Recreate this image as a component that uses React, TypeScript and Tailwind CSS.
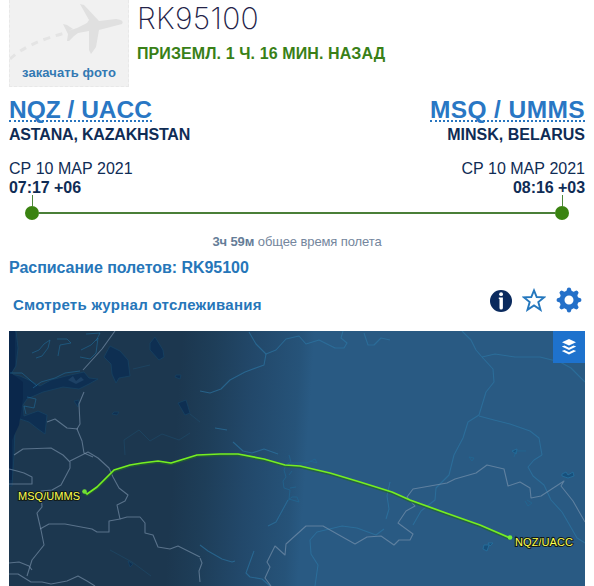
type Airport = { code: string; city: string; date: string; time: string };

const origin: Airport = { code: 'NQZ / UACC', city: 'ASTANA, KAZAKHSTAN', date: 'СР 10 МАР 2021', time: '07:17 +06' };
const destination: Airport = { code: 'MSQ / UMMS', city: 'MINSK, BELARUS', date: 'СР 10 МАР 2021', time: '08:16 +03' };

// country borders
const borders = [
  'M115 331 L102 349 L83 370',
  'M84 392 L79 404 L80 424 L77 429 L82 441 L84 453 L93 457',
  'M47 422 L55 419 L67 428 L78 429',
  'M14 455 L23 449 L51 448 L63 455 L70 462 L70 468 L61 485 L52 490 L41 491 L42 507 L37 513 L41 530 L44 545 L32 560 L27 576',
  'M70 461 L88 452 L98 458 L109 468 L113 477 L119 488 L128 495 L125 501 L117 505 L120 519 L109 521 L109 532 L97 532 L92 529 L65 524 L49 524 L40 529',
  'M120 519 L127 517 L140 517 L145 523 L145 533 L153 535 L158 547 L170 549 L178 546 L200 557',
  'M9 469 L17 471 L24 473 L32 477 L32 484 L9 484',
  'M9 563 L19 562 L29 566 L32 570 M9 574 L18 574 L31 582 L42 582 L51 584 L67 581 L78 576 L87 581 L95 586',
  'M271 586 L265 578 L270 567 L267 562 L275 546 L285 555 L286 544 L306 526 L323 526 L355 544 L367 537 L381 536 L394 545 L399 540 L410 540 L413 534 L398 523 L406 511 L415 506 L407 497 L413 489 L447 483 L455 479 L476 473 L487 465 L504 469 L508 486 L520 482 L530 488 L531 498 L541 496 L564 481 L561 486 L573 501 L585 522',
  'M200 558 L202 563 L199 571 L200 582',
];

// rivers
const rivers = [
  'M249 332 L256 344 L266 354 L276 350 L286 339 L299 336 L306 344 L319 340 L335 348 L344 348 L347 343 L341 338 L343 331',
  'M364 333 L368 345 L374 345 L381 338 L390 340',
  'M266 354 L264 365 L245 372 L230 380 L221 389 L210 393 L200 391',
  'M462 331 L471 340 L476 350 L482 357 L493 369 L494 382 L486 392 L479 415 L468 422 L463 438 L454 455',
  'M482 357 L495 354 L515 357 L540 357 L560 362 L571 368 L585 382',
  'M479 416 L494 420 L510 424 L530 431 L539 438 L542 455',
  'M542 455 L534 460 L528 467 L533 476 L544 485 L551 500 L562 512 L569 524 L577 538 L585 543',
  'M454 455 L449 475 L436 488 L435 500 L421 511 L413 525',
  'M390 482 L387 496 L389 509 L386 519 M384 529 L376 535 L357 528 L342 526 L317 532 L310 540 L311 554 L318 565 L315 586',
  'M288 500 L282 511 L276 522 L268 526',
  'M200 545 L208 551 L222 559 L232 562 L235 561 M254 551 L246 573 L250 577 L262 579 L270 586',
  'M215 428 L227 430 M233 442 L243 451 L252 453 L264 449 L278 454',
];

// small streams, barely visible on the night side
const streams = [
  'M125 455 L124 440 L139 430 L150 441 L162 434 L179 440 L190 433',
  'M110 550 L132 562 L151 576',
  'M133 369 L150 365 M190 414 L200 422',
];

// jagged reservoir and lake outlines
const shorelines = [
  'M289 455 L291 462 L286 465 L284 470 L286 477 L283 481 L284 488 L290 490 L289 499 L299 502 L297 497 L292 497 L287 501 M291 463 L307 463 L315 459 L317 463 L310 461 M289 475 L292 471 M290 488 L296 487',
  'M32 353 L39 350 L44 344 L50 340 L48 348 L42 356 L36 358 M57 339 L67 339 L71 343 L60 345 L58 356 M81 350 L91 345 L98 338 L96 353 L90 359 L80 357 M86 334 L100 333 L96 341',
  'M27 397 L36 399 L34 408 L24 406 L26 414 M10 373 L22 373 L30 380 L37 386 M33 388 L41 382 L55 378 L65 373 L80 371',
  'M526 451 L516 451 L514 457 M527 500 L532 503 L528 506 L525 501',
  'M469 457 L474 458 L472 461 Z',
];

const water = [
  'M9 331 L16 331 L18 348 L16 366 L11 374 L20 376 L31 381 L40 386 L51 380 L66 376 L84 372 L89 378 L98 379 L89 384 L79 389 L63 387 L43 392 L27 399 L23 405 L24 416 L38 411 L47 415 L45 434 L38 429 L29 422 L20 419 L15 429 L14 455 L12 486 L9 486 Z',
  'M104 357 L110 346 L120 351 L128 360 L130 376 L119 378 L116 383 L112 374 L111 364 Z',
  'M150 343 L155 337 L163 350 L164 357 L159 360 L150 350 Z',
  'M178 403 L186 400 L190 413 L185 415 Z',
  'M176 375 L181 375 L180 379 L175 377 Z M114 412 L119 412 L117 415 L112 414 Z',
  'M74 401 L79 400 L78 407 Z M128 561 L133 564 L130 567 Z',
];

const brightWater = [
  'M562 474 L566 472 L568 475 L573 472 L574 476 L568 478 L562 476 Z',
  'M484 545 L489 545 L487 551 L483 549 Z M488 543 L493 543 L490 546 Z',
  'M512 451 L517 449 L516 454 Z',
];

const track =
  'M84 491 L87 494 L97 487 L114 470 L130 465 L142 463 L158 461 L171 463 L184 459 L197 455 L220 454 L238 454 L264 459 L285 465 L300 466 L330 473 L360 482 L392 492 L410 500 L446 513 L480 525 L510 538';

const teeth = [0, 45, 90, 135, 180, 225, 270, 315];

function AirportInfo({ airport, right }: { airport: Airport; right?: boolean }) {
  return (
    <div className={`flex flex-col text-[#0f2c55] ${right ? 'items-end' : 'items-start'}`}>
      <a
        className={`flex h-[26px] items-center border-b-2 border-dotted border-[#2875bf] pt-[5px] text-[24.5px] font-bold leading-none text-[#2977c4] whitespace-nowrap ${
          right ? 'tracking-[0.4px]' : 'tracking-normal'
        }`}
      >
        {airport.code}
      </a>
      <div className={`mt-[3px] h-5 text-base font-bold leading-5 whitespace-nowrap ${right ? 'tracking-normal' : 'tracking-[-0.18px]'}`}>
        {airport.city}
      </div>
      <div className="mt-3.5 h-5 text-base leading-5 whitespace-nowrap">{airport.date}</div>
      <div className="h-[18px] text-base font-bold leading-[18px] tracking-[-0.05px] whitespace-nowrap">{airport.time}</div>
    </div>
  );
}

function PhotoBox() {
  return (
    <div className="relative h-[87px] w-[120px] shrink-0 bg-[#f1f1f1] border border-t-0 border-dashed border-[#e8e8e8]">
      <svg className="absolute left-0 top-0" width="118" height="65" viewBox="10 0 118 65" fill="none">
        <path d="M10 59 Q28 42 69 32" stroke="#e4e4e4" strokeWidth="3" strokeDasharray="7 6" />
        <path
          d="M68 31 L77 28 L87 23 L89 20 L80 4 L84 5 L99 21 L116 19 Q125 20 122 24 L99 30 L96 47 L91 54 L89 50 L89 31 L78 33 L74 36 L69 41 L67 41 L68 34 L63 24 L67 25 L73 29 Z"
          fill="#e0e0e0"
        />
      </svg>
      <a className="absolute inset-x-0 top-[65px] text-center text-[13px] font-bold leading-4 tracking-[0.1px] text-[#3379b3] whitespace-nowrap">закачать фото</a>
    </div>
  );
}

function InfoIcon() {
  return (
    <svg width="22" height="22" viewBox="0 0 22 22">
      <circle cx="11" cy="11" r="11" fill="#0a2a5e" />
      <circle cx="11.1" cy="4.2" r="1.9" fill="#fff" />
      <path d="M8.8 7.4 H12.9 V18 Q12.9 19.6 11.1 19.6 Q9.5 19.6 9.5 18 V9 H8.8 Z" fill="#fff" />
    </svg>
  );
}

function StarIcon() {
  return (
    <svg width="24" height="24" viewBox="0 0 24 24" fill="none" stroke="#2477bd" strokeWidth="1.9">
      <path d="M12 2.4 L14.7 9 L22 9.4 L16.3 14 L18.5 21.8 L12 17.4 L5.5 21.8 L7.7 14 L2 9.4 L9.3 9 Z" />
    </svg>
  );
}

function GearIcon() {
  return (
    <svg width="26" height="26" viewBox="0 0 26 26">
      {teeth.map((angle) => (
        <path key={angle} d="M9.8 5.5 L11.4 1 Q13 0.1 14.6 1 L16.2 5.5 Z" transform={`rotate(${angle} 13 13)`} fill="#2470c9" />
      ))}
      <circle cx="13" cy="13" r="7" fill="none" stroke="#2470c9" strokeWidth="5" />
    </svg>
  );
}

function FlightMap() {
  return (
    <div className="relative h-[255px] w-[576px] overflow-hidden">
      <svg className="block" width="576" height="255" viewBox="9 331 576 255" fill="none">
        <defs>
          <linearGradient id="dusk" gradientUnits="userSpaceOnUse" x1="175" y1="440" x2="307" y2="449">
            <stop offset="0" stopColor="#1c374f" />
            <stop offset="0.25" stopColor="#1e3e59" />
            <stop offset="0.55" stopColor="#22486a" />
            <stop offset="0.9" stopColor="#265379" />
            <stop offset="1" stopColor="#295a83" />
          </linearGradient>
        </defs>
        <rect x="9" y="331" width="576" height="255" fill="url(#dusk)" />
        {water.map((d) => (
          <path key={d} d={d} fill="#0e2f52" stroke="#174363" strokeWidth="0.8" />
        ))}
        <path d="M9 331 H15 V366 L11 373 L23 382 V398 L19 425 L12 440 V480 H9 Z" fill="#0a274b" />
        <path d="M68 380 L73 376 L76 381 L81 377 L84 380 L76 384 Z" fill="#1d4165" />
        {brightWater.map((d) => (
          <path key={d} d={d} fill="#17507c" stroke="#2671a0" strokeWidth="0.8" />
        ))}
        {rivers.map((d) => (
          <path key={d} d={d} stroke="#2d7aa8" strokeWidth="1.1" strokeLinejoin="round" opacity="0.6" />
        ))}
        {streams.map((d) => (
          <path key={d} d={d} stroke="#1d5478" strokeWidth="1" opacity="0.4" />
        ))}
        {shorelines.map((d) => (
          <path key={d} d={d} stroke="#206b98" strokeWidth="1" opacity="0.6" />
        ))}
        {borders.map((d) => (
          <path key={d} d={d} stroke="#8299b3" strokeWidth="1.1" strokeLinejoin="round" opacity="0.6" />
        ))}
        <path d={track} transform="translate(0 1)" stroke="#24652c" strokeWidth="2.6" strokeLinejoin="round" opacity="0.7" />
        <path d={track} stroke="#76ee22" strokeWidth="1.7" strokeLinejoin="round" />
        <circle cx="84.5" cy="491.5" r="2.3" fill="#70dd38" />
        <circle cx="510" cy="537.5" r="2.3" fill="#70ef38" />
        <g fontFamily="Liberation Sans, Arial, sans-serif" fontSize="11" fill="#ffff4c" stroke="#111b1b" strokeWidth="2" paintOrder="stroke">
          <text x="18" y="500" textLength="62">MSQ/UMMS</text>
          <text x="515" y="546" textLength="58">NQZ/UACC</text>
        </g>
      </svg>
      <button className="absolute right-0 top-0 flex h-8 w-8 items-center justify-center bg-[#1e72cd]">
        <svg width="16" height="18" viewBox="0 0 16 18" fill="#fff">
          <path d="M8 1 L15 4.3 L8 7.6 L1 4.3 Z" />
          <path d="M0.8 8.5 L3.5 7.5 L8 9.7 L12.5 7.5 L15.2 8.5 L8 12 Z" />
          <path d="M0.8 13 L3.5 12 L8 14.2 L12.5 12 L15.2 13 L8 16.6 Z" />
        </svg>
      </button>
    </div>
  );
}

export default function App() {
  return (
    <main className="h-[586px] w-[594px] overflow-hidden bg-white pl-[9px] font-['Liberation_Sans',Arial,sans-serif]">
      <header className="flex h-24 items-start gap-2">
        <PhotoBox />
        <div>
          <h1 className="h-[38px] font-['Inter',sans-serif] text-[30px] font-extralight leading-9 tracking-[0.3px] text-[#242348]">RK95100</h1>
          <div className="mt-[6px] h-5 text-base font-bold leading-5 tracking-[0.1px] text-[#398017] whitespace-nowrap">
            ПРИЗЕМЛ. 1 Ч. 16 МИН. НАЗАД
          </div>
        </div>
      </header>

      <section className="flex w-[576px] justify-between">
        <AirportInfo airport={origin} />
        <AirportInfo airport={destination} right />
      </section>

      <div className="-mt-0.5 ml-4 flex h-[25px] w-[544px] items-start justify-between">
        <div className="flex w-3.5 flex-col items-center">
          <div className="h-[11px] w-px bg-[#4e873b]" />
          <div className="h-3.5 w-3.5 rounded-full bg-[#3a8311]" />
        </div>
        <div className="mt-[17px] h-0.5 flex-1 bg-[#4a7f38]" />
        <div className="flex w-3.5 flex-col items-center">
          <div className="h-[11px] w-px bg-[#4e873b]" />
          <div className="h-3.5 w-3.5 rounded-full bg-[#3a8311]" />
        </div>
      </div>

      <div className="mt-3.5 h-4 w-[576px] text-center text-[13px] leading-4 tracking-[-0.1px] text-[#74869d]">
        <b className="text-[#657d98]">3ч 59м</b> общее время полета
      </div>
      <a className="mt-2 block h-5 text-base font-bold leading-5 tracking-[-0.04px] text-[#2676b9]">Расписание полетов: RK95100</a>
      <div className="flex h-[53px] w-[576px] items-start justify-between pl-1 pr-[3px]">
        <a className="mt-[17px] text-[15px] font-bold leading-5 tracking-[0.28px] text-[#2676b9]">Смотреть журнал отслеживания</a>
        <div className="mt-[9px] flex items-center">
          <span className="mt-0.5"><InfoIcon /></span>
          <span className="ml-2.5"><StarIcon /></span>
          <span className="ml-2.5"><GearIcon /></span>
        </div>
      </div>
      <FlightMap />
    </main>
  );
}
